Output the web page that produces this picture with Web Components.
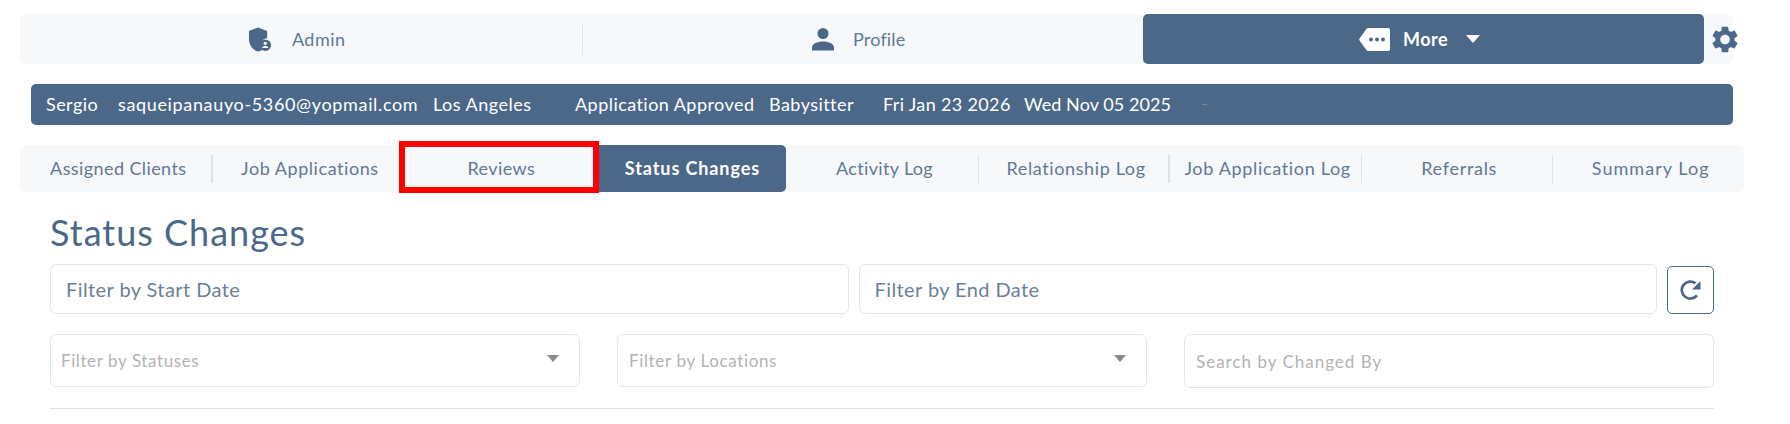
<!DOCTYPE html>
<html lang="en">
<head>
<meta charset="utf-8">
<title>Status Changes</title>
<style>
    html, body { margin: 0; background: #fff; }
    body { font-family: "Lato", "Noto Sans", sans-serif; color: #4b6889; width: 1790px; height: 424px; overflow: hidden; }
</style>
</head>
<body>
<main-nav>
    <nav-item icon="admin">Admin</nav-item>
    <nav-item icon="profile" divider style="letter-spacing:0.17px">Profile</nav-item>
    <nav-item icon="more" active>More</nav-item>
</main-nav>
<info-bar>
    <span style="width:72px">Sergio</span>
    <span style="width:315px;letter-spacing:0.65px">saqueipanauyo-5360@yopmail.com</span>
    <span style="width:142px;letter-spacing:0.5px">Los Angeles</span>
    <span style="width:194px">Application Approved</span>
    <span style="width:114px">Babysitter</span>
    <span style="width:141px;letter-spacing:0.35px">Fri Jan 23 2026</span>
    <span style="width:177px;letter-spacing:0.07px">Wed Nov 05 2025</span>
    <span style="color:#7d93aa;font-size:12px">–</span>
</info-bar>
<tab-strip>
    <tab-item divider="thick" style="letter-spacing:0.4px">Assigned Clients</tab-item>
    <tab-item>Job Applications</tab-item>
    <tab-item style="letter-spacing:0.4px">Reviews</tab-item>
    <tab-item active>Status Changes</tab-item>
    <tab-item divider="thin" style="letter-spacing:0.35px">Activity Log</tab-item>
    <tab-item divider="thick" style="letter-spacing:0.62px">Relationship Log</tab-item>
    <tab-item divider="thin" style="letter-spacing:0.67px">Job Application Log</tab-item>
    <tab-item divider="thin" style="letter-spacing:0.7px">Referrals</tab-item>
    <tab-item style="letter-spacing:1.05px">Summary Log</tab-item>
    <red-mark slot="overlay"></red-mark>
</tab-strip>
<status-panel heading="Status Changes">
    <filter-field slot="dates" size="large">Filter by Start Date</filter-field>
    <filter-field slot="dates" size="large" style="width:798px">Filter by End Date</filter-field>
    <refresh-button slot="dates"></refresh-button>
    <filter-field slot="selects" caret style="letter-spacing:0.6px;padding-left:10px">Filter by Statuses</filter-field>
    <filter-field slot="selects" caret style="letter-spacing:0.65px">Filter by Locations</filter-field>
    <filter-field slot="selects" search style="letter-spacing:1px">Search by Changed By</filter-field>
</status-panel>

<script>
    const icons = {
        admin: `<svg class="admin" width="24" height="26" viewBox="0 0 25 26"><path fill="#4b6889" d="M10.5 1 20 4.6V12a8 8 0 0 0-5.6 12.6c-1.1.6-2.5 1.1-3.9 1.4C4.9 24.6 1 19.2 1 13.300V4.600z"/><circle cx="18" cy="19.500" r="6" fill="#4b6889"/><circle cx="18" cy="17.500" r="1.700" fill="#f7f8fa"/><path fill="#f7f8fa" d="M14.800 22.500c.4-1.700 1.700-2.500 3.200-2.500s2.800.8 3.200 2.500z"/></svg>`,
        profile: `<svg width="22" height="24" viewBox="0 0 22 24"><circle cx="11" cy="6.500" r="5.500" fill="#4b6889"/><path fill="#4b6889" d="M0 23.500v-3C0 16.800 5 14.500 11 14.500s11 2.300 11 6v3z"/></svg>`,
        more: `<svg width="31" height="27" viewBox="0 0 31 27"><path fill="#fff" d="M9 2h20a2 2 0 0 1 2 2v19a2 2 0 0 1-2 2H9c-.7 0-1.300-.3-1.600-.9L.4 14.300a1.500 1.500 0 0 1 0-1.600L7.400 2.900C7.700 2.300 8.300 2 9 2z"/><circle cx="12" cy="13.500" r="2" fill="#4b6889"/><circle cx="18" cy="13.500" r="2" fill="#4b6889"/><circle cx="24" cy="13.500" r="2" fill="#4b6889"/></svg>`
    };

    class MainNav extends HTMLElement {
        constructor() {
            super();
            const shadow = this.attachShadow({ mode: 'open' });
            shadow.innerHTML = `
                <style>
                    :host {
                        display: grid;
                        grid-template-columns: 561.5px 561.500px 561px 29px;
                        width: 1713px;
                        height: 50px;
                        margin: 14px 0 0 20px;
                        background: #f7f8fa;
                        border-radius: 6px;
                    }
                    .gear {
                        display: flex;
                        align-items: center;
                        margin-left: 5px;
                        margin-right: -8px;
                    }
                </style>
                <slot></slot>
                <div class="gear">
                    <svg width="32" height="33" viewBox="0 0 24 24"><path fill="#4b6889" d="M19.14 12.94c.04-.3.06-.61.06-.94 0-.32-.02-.64-.07-.94l2.03-1.58c.18-.14.23-.41.12-.61l-1.92-3.32c-.12-.22-.37-.29-.59-.22l-2.39.96c-.5-.38-1.03-.7-1.62-.94l-.36-2.54c-.04-.24-.24-.41-.48-.41h-3.84c-.24 0-.43.17-.47.41l-.36 2.54c-.59.24-1.13.57-1.62.94l-2.39-.96c-.22-.08-.47 0-.59.22L2.74 8.87c-.12.21-.08.47.12.61l2.03 1.58c-.05.3-.09.63-.09.94s.02.64.07.94l-2.03 1.58c-.18.14-.23.41-.12.61l1.92 3.32c.12.22.37.29.59.22l2.39-.96c.5.38 1.03.7 1.62.94l.36 2.54c.05.24.24.41.48.41h3.84c.24 0 .44-.17.47-.41l.36-2.54c.59-.24 1.13-.56 1.62-.94l2.39.96c.22.08.47 0 .59-.22l1.92-3.32c.12-.22.07-.47-.12-.61l-2.01-1.58zM12 15.6c-1.98 0-3.6-1.62-3.6-3.6s1.62-3.6 3.6-3.6 3.6 1.62 3.6 3.6-1.62 3.6-3.6 3.6z"/></svg>
                </div>
            `;
        }
    }

    class NavItem extends HTMLElement {
        constructor() {
            super();
            const shadow = this.attachShadow({ mode: 'open' });
            const active = this.hasAttribute('active');
            shadow.innerHTML = `
                <style>
                    :host {
                        display: flex;
                        align-items: center;
                        justify-content: center;
                        gap: 19px;
                        padding-right: 8px;
                        font-size: 18px;
                        letter-spacing: 0.5px;
                        color: #5f7995;
                    }
                    :host([active]) {
                        gap: 13px;
                        background: #4b6889;
                        color: #fff;
                        font-weight: 700;
                        border-radius: 5px;
                    }
                    svg { display: block; }
                    .admin { margin-right: 1px; }
                    .caret {
                        width: 0;
                        height: 0;
                        margin-left: 5px;
                        border-left: 7px solid transparent;
                        border-right: 7px solid transparent;
                        border-top: 8px solid #fff;
                    }
                    .rule {
                        width: 1px;
                        height: 31px;
                        background: #e3e5e9;
                        margin-right: auto;
                    }
                    .spacer { margin-left: auto; }
                </style>
                ${this.hasAttribute('divider') ? '<div class="rule"></div>' : ''}
                ${icons[this.getAttribute('icon')]}
                <slot></slot>
                ${active ? '<div class="caret"></div>' : ''}
                ${this.hasAttribute('divider') ? '<div class="spacer"></div>' : ''}
            `;
        }
    }

    class InfoBar extends HTMLElement {
        constructor() {
            super();
            const shadow = this.attachShadow({ mode: 'open' });
            shadow.innerHTML = `
                <style>
                    :host {
                        display: flex;
                        align-items: center;
                        box-sizing: border-box;
                        width: 1702px;
                        height: 41px;
                        margin: 20px 0 0 31px;
                        padding: 0 0 2px 15px;
                        background: #4b6889;
                        border-radius: 5px;
                        color: #fff;
                        font-size: 18px;
                        letter-spacing: 0.45px;
                        white-space: nowrap;
                    }
                    ::slotted(span) { display: block; flex: none; }
                </style>
                <slot></slot>
            `;
        }
    }

    class TabStrip extends HTMLElement {
        constructor() {
            super();
            const shadow = this.attachShadow({ mode: 'open' });
            shadow.innerHTML = `
                <style>
                    :host {
                        position: relative;
                        display: grid;
                        grid-template-columns: repeat(9, 1fr);
                        width: 1724px;
                        height: 47px;
                        margin: 20px 0 0 20px;
                        background: #f7f8fa;
                        border-radius: 6px;
                    }
                </style>
                <slot></slot>
                <slot name="overlay"></slot>
            `;
        }
    }

    class TabItem extends HTMLElement {
        constructor() {
            super();
            const shadow = this.attachShadow({ mode: 'open' });
            shadow.innerHTML = `
                <style>
                    :host {
                        position: relative;
                        display: flex;
                        align-items: center;
                        justify-content: center;
                        box-sizing: border-box;
                        min-width: 0;
                        padding: 0 0 2px 5px;
                        font-size: 18px;
                        letter-spacing: 0.55px;
                        color: #5f7995;
                        white-space: nowrap;
                    }
                    :host([active]) {
                        padding-left: 4px;
                        background: #4b6889;
                        color: #fff;
                        font-weight: 700;
                        letter-spacing: 0.9px;
                        border-radius: 0 5px 5px 0;
                    }
                    :host([divider])::after {
                        content: "";
                        position: absolute;
                        right: -1px;
                        top: 10px;
                        height: 28px;
                        background: #dfe2e8;
                    }
                    :host([divider="thin"])::after { width: 1px; }
                    :host([divider="thick"])::after { width: 2px; }
                </style>
                <slot></slot>
            `;
        }
    }

    // the red annotation around Reviews sits on top of the tab strip
    class RedMark extends HTMLElement {
        constructor() {
            super();
            const shadow = this.attachShadow({ mode: 'open' });
            shadow.innerHTML = `
                <style>
                    :host {
                        position: absolute;
                        left: 379px;
                        top: -4px;
                        width: 200px;
                        height: 52px;
                        box-sizing: border-box;
                        border: 6px solid #ff0000;
                    }
                </style>
            `;
        }
    }

    class StatusPanel extends HTMLElement {
        constructor() {
            super();
            const shadow = this.attachShadow({ mode: 'open' });
            shadow.innerHTML = `
                <style>
                    :host {
                        display: block;
                        width: 1664px;
                        margin: 0 0 0 50px;
                    }
                    h2 {
                        margin: 0;
                        padding-top: 19px;
                        height: 53px;
                        box-sizing: border-box;
                        font-size: 36px;
                        line-height: 43px;
                        font-weight: 400;
                        letter-spacing: 1px;
                        color: #4b6889;
                    }
                    .dates {
                        display: flex;
                        gap: 9.500px;
                        align-items: flex-end;
                        height: 50px;
                        margin-top: 19px;
                    }
                    .selects {
                        display: grid;
                        grid-template-columns: 530px 530px 530px;
                        justify-content: space-between;
                        margin-top: 20px;
                    }
                    hr {
                        margin: 20px 0 0;
                        border: 0;
                        height: 1px;
                        background: #e2e3e5;
                    }
                </style>
                <h2>${this.getAttribute('heading')}</h2>
                <div class="dates"><slot name="dates"></slot></div>
                <div class="selects"><slot name="selects"></slot></div>
                <hr>
            `;
        }
    }

    class FilterField extends HTMLElement {
        constructor() {
            super();
            const shadow = this.attachShadow({ mode: 'open' });
            shadow.innerHTML = `
                <style>
                    :host {
                        display: flex;
                        align-items: center;
                        justify-content: space-between;
                        box-sizing: border-box;
                        height: 53px;
                        padding: 0 20px 0 11px;
                        border: 1px solid #e6e6e6;
                        border-radius: 6px;
                        background: #fff;
                        color: #b3b3b3;
                        font-size: 17px;
                        letter-spacing: 0.3px;
                    }
                    :host([search]) { height: 54px; }
                    :host([size="large"]) {
                        flex: none;
                        width: 799px;
                        height: 50px;
                        padding: 0 15px;
                        color: #6c7f95;
                        font-size: 20px;
                        letter-spacing: 0.42px;
                    }
                    .caret {
                        width: 0;
                        height: 0;
                        border-left: 6.500px solid transparent;
                        border-right: 6.500px solid transparent;
                        border-top: 7px solid #8b8b8b;
                        margin-bottom: 4px;
                    }
                </style>
                <slot></slot>
                ${this.hasAttribute('caret') ? '<div class="caret"></div>' : ''}
            `;
        }
    }

    class RefreshButton extends HTMLElement {
        constructor() {
            super();
            const shadow = this.attachShadow({ mode: 'open' });
            shadow.innerHTML = `
                <style>
                    :host {
                        display: flex;
                        align-items: center;
                        justify-content: center;
                        box-sizing: border-box;
                        flex: none;
                        width: 47px;
                        height: 48px;
                        margin-left: 1px;
                        border: 1px solid #4b6889;
                        border-radius: 5px;
                        background: #fff;
                    }
                </style>
                <svg width="22" height="22" viewBox="0 0 22 22">
                    <path fill="none" stroke="#4b6889" stroke-width="2.800" d="M17 16.300A8.500 8.500 0 1 1 15.500 4.300"/>
                    <path fill="#4b6889" d="M20.500 2V10.500H12z"/>
                </svg>
            `;
        }
    }

    customElements.define('main-nav', MainNav);
    customElements.define('nav-item', NavItem);
    customElements.define('info-bar', InfoBar);
    customElements.define('tab-strip', TabStrip);
    customElements.define('tab-item', TabItem);
    customElements.define('red-mark', RedMark);
    customElements.define('status-panel', StatusPanel);
    customElements.define('filter-field', FilterField);
    customElements.define('refresh-button', RefreshButton);
</script>
</body>
</html>
